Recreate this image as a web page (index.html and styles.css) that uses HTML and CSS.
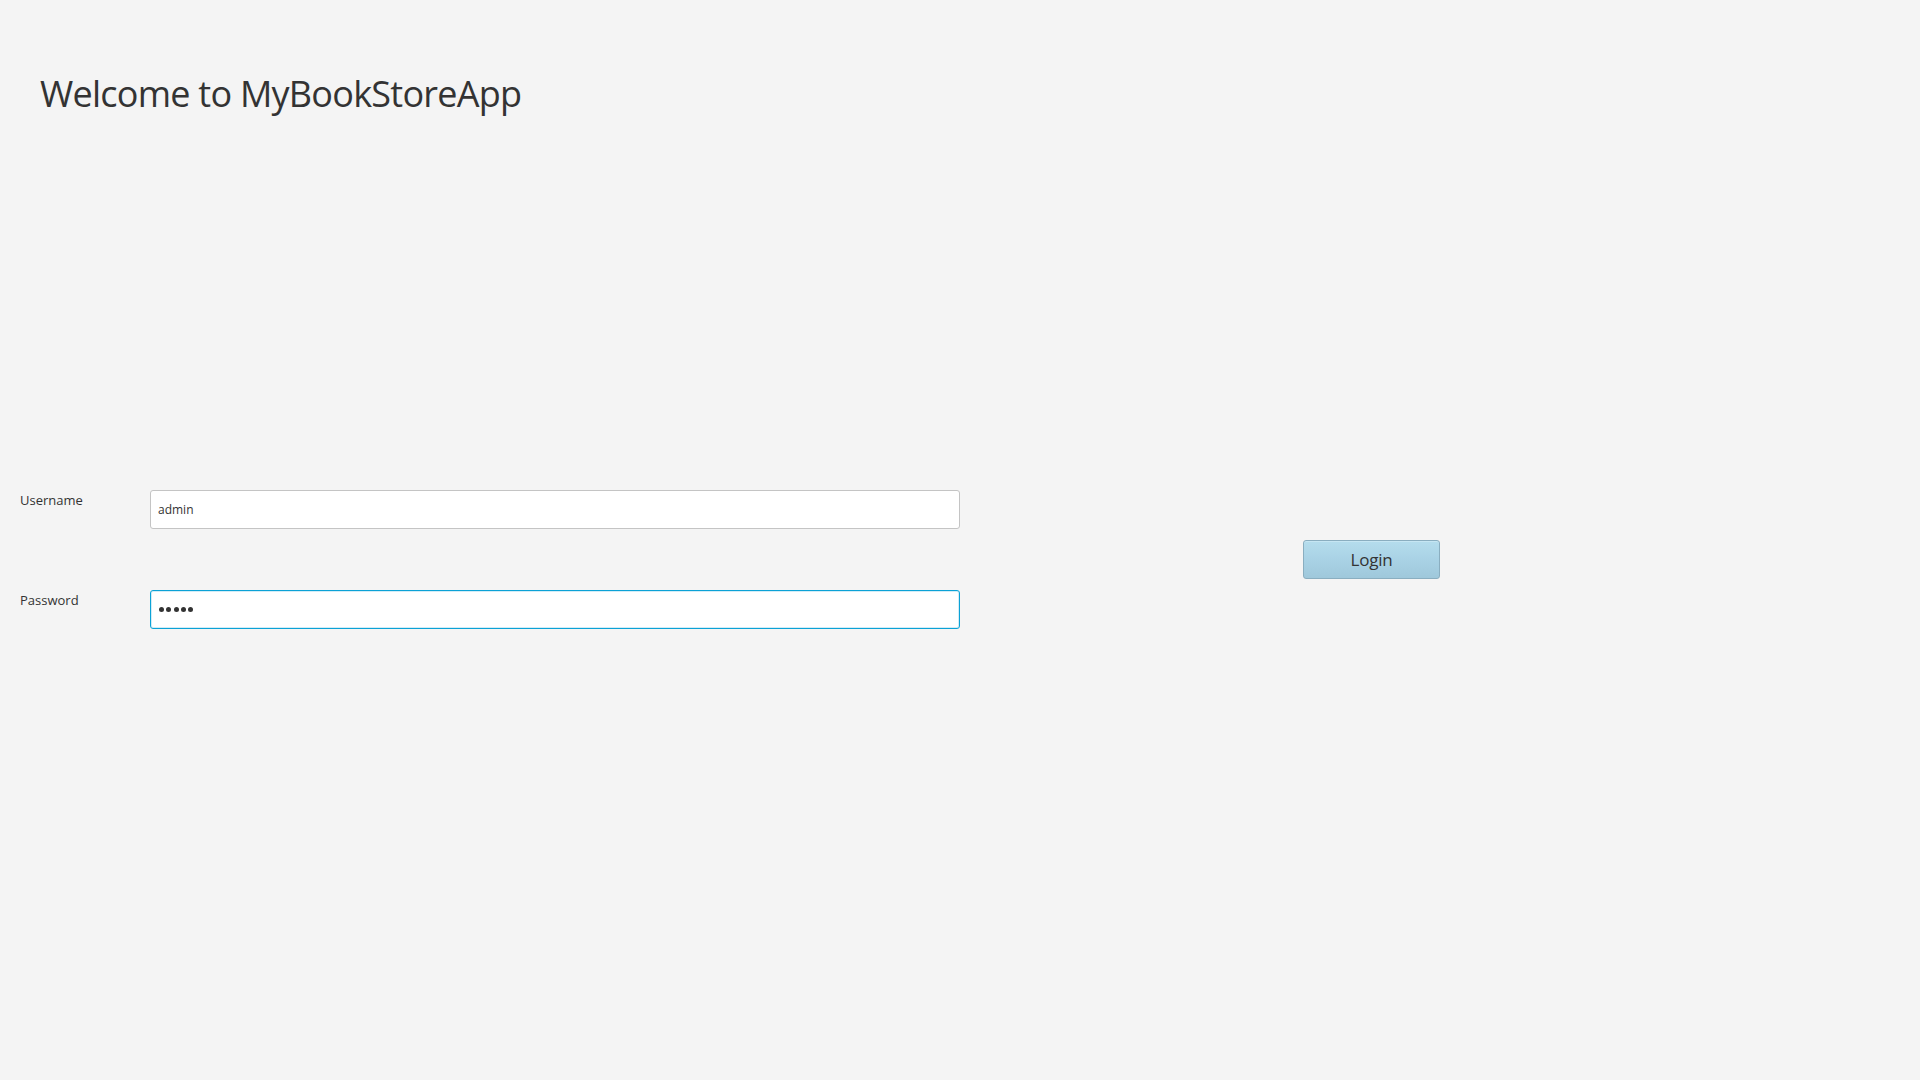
FILE: index.html
```html
<!DOCTYPE html>
<html lang="en">
<head>
<meta charset="utf-8">
<title>MyBookStoreApp</title>
<link rel="stylesheet" href="styles.css">
</head>
<body>
<main class="screen">
  <h1 class="title">Welcome to MyBookStoreApp</h1>
  <section class="login">
    <div class="form">
      <label class="label" for="user">Username</label>
      <div class="field"><input id="user" class="input" type="text" value="admin"></div>
      <label class="label" for="pass">Password</label>
      <div class="field field-focus" id="pass">
        <span class="dot"></span><span class="dot"></span><span class="dot"></span><span class="dot"></span><span class="dot"></span>
      </div>
    </div>
    <div class="actions">
      <button class="btn" type="button">Login</button>
    </div>
  </section>
</main>
</body>
</html>
```
FILE: styles.css
```css
html, body {
  margin: 0;
  padding: 0;
  background: #f4f4f4;
}
body {
  width: 1920px;
  height: 1080px;
  overflow: hidden;
  font-family: "Open Sans", "Noto Sans", sans-serif;
  color: #333333;
}
.screen {
  display: flex;
  flex-direction: column;
}
.title {
  margin: 0;
  padding: 72px 0 0 40px;
  font-weight: 400;
  font-size: 36px;
  line-height: 44px;
  letter-spacing: -0.75px;
  color: #333333;
}
.login {
  display: flex;
  align-items: center;
  margin-top: 374px;
  padding-left: 20px;
}
.form {
  display: grid;
  grid-template-columns: 130px 810px;
  row-gap: 61px;
}
.label {
  font-size: 13px;
  line-height: 17px;
  padding-top: 2px;
  color: #333333;
}
.field {
  box-sizing: border-box;
  height: 39px;
  background: #ffffff;
  border: 1px solid #c4c4c4;
  border-radius: 3px;
  display: flex;
  align-items: center;
  padding-left: 7px;
}
.input {
  border: 0;
  outline: 0;
  padding: 0;
  margin: 0;
  width: 100%;
  background: transparent;
  font-family: "Open Sans", "Noto Sans", sans-serif;
  font-size: 12px;
  color: #333333;
}
.field-focus {
  border-color: #0ba2d6;
  box-shadow: inset 0 0 0 1px #d2ecf6;
  padding-left: 8px;
  gap: 2.3px;
}
.dot {
  width: 5px;
  height: 5px;
  border-radius: 50%;
  background: #333333;
}
.actions {
  margin-left: 343px;
}
.btn {
  box-sizing: border-box;
  width: 137px;
  height: 39px;
  border: 1px solid #8aaec0;
  border-radius: 3px;
  background: linear-gradient(to bottom, #b5dded 0%, #a9d2e5 50%, #9fc8db 100%);
  box-shadow: inset 0 1px 0 #c6e6f3;
  font-family: "Open Sans", "Noto Sans", sans-serif;
  font-size: 17px;
  letter-spacing: -0.2px;
  color: #333333;
  padding: 0;
  cursor: pointer;
}
```
